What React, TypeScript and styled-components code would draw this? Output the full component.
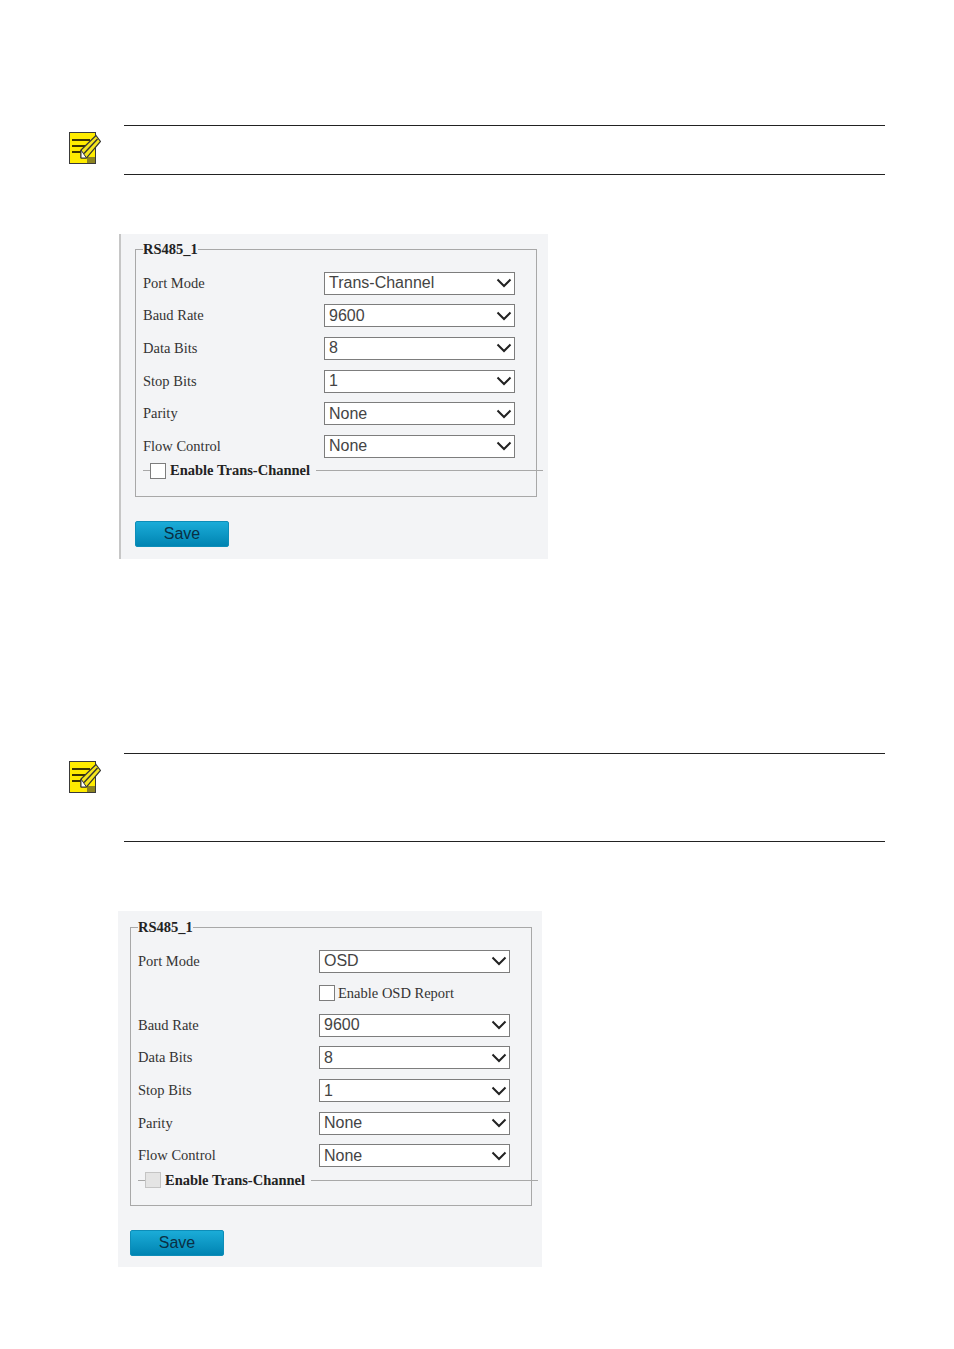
import React from "react";
import styled, { createGlobalStyle } from "styled-components";

const GlobalStyle = createGlobalStyle`
  body {
    margin: 0;
    background: #fff;
  }
`;

const Page = styled.div`
  width: 954px;
  height: 1349px;
  overflow: hidden;
  display: flex;
  flex-direction: column;
  align-items: flex-start;
  padding-top: 125px;
  box-sizing: border-box;
  font-family: "Liberation Serif", serif;
`;

const Note = styled.div<{ $height: number; $after: number }>`
  display: flex;
  align-items: flex-start;
  gap: 23px;
  margin-left: 69px;
  margin-bottom: ${({ $after }) => $after}px;
  height: ${({ $height }) => $height}px;
`;

const NoteBody = styled.div`
  width: 761px;
  height: 100%;
  box-sizing: border-box;
  border-top: 1px solid #222;
  border-bottom: 1px solid #222;
`;

const IconSlot = styled.svg<{ $top: number }>`
  display: block;
  margin-top: ${({ $top }) => $top}px;
  flex: none;
`;

const Panel = styled.div<{ $bordered?: boolean; $width: number; $after?: number }>`
  width: ${({ $width }) => $width}px;
  box-sizing: border-box;
  margin-left: ${({ $bordered }) => ($bordered ? 119 : 118)}px;
  margin-bottom: ${({ $after }) => $after ?? 0}px;
  padding: ${({ $bordered }) => ($bordered ? "7px 0 12px 14px" : "8px 0 11px 12px")};
  background: #f3f4f6;
  border-left: ${({ $bordered }) => ($bordered ? "2px solid #c6c6c6" : "none")};
`;

const Group = styled.fieldset<{ $osd?: boolean }>`
  width: 402px;
  box-sizing: border-box;
  margin: 0;
  padding: 10px 21px ${({ $osd }) => ($osd ? "16.5px" : "17.5px")} 7px;
  border: 1px solid #a8a8a8;
`;

const GroupTitle = styled.legend`
  padding: 0;
  font-size: 14.5px;
  line-height: 16px;
  font-weight: 700;
  color: #222;
`;

const Row = styled.div<{ $height?: number }>`
  display: grid;
  grid-template-columns: 181px 191px;
  align-items: center;
  height: ${({ $height }) => $height ?? 32.6}px;
`;

const Label = styled.span`
  font-size: 14.5px;
  color: #333;
`;

const SelectBox = styled.div`
  grid-column: 2;
  height: 23px;
  box-sizing: border-box;
  display: flex;
  align-items: center;
  justify-content: space-between;
  padding: 0 2px 0 4px;
  background: #fff;
  border: 1px solid #7d7d7d;
  font-family: "Liberation Sans", sans-serif;
  font-size: 16px;
  color: #444;
`;

const CheckLine = styled.div`
  grid-column: 2;
  display: flex;
  align-items: center;
  gap: 3px;
  font-size: 14.5px;
  color: #333;
`;

const Check = styled.span<{ $disabled?: boolean }>`
  display: block;
  flex: none;
  width: 16px;
  height: 16px;
  box-sizing: border-box;
  background: ${({ $disabled }) => ($disabled ? "#e4e4e4" : "#fff")};
  border: 1px solid ${({ $disabled }) => ($disabled ? "#c4c4c4" : "#7d7d7d")};
`;

const SubHead = styled.div`
  display: flex;
  align-items: center;
  height: 16px;
  margin-right: -28px;
`;

const Rule = styled.span<{ $grow?: boolean }>`
  display: block;
  height: 1px;
  background: #a8a8a8;
  flex: ${({ $grow }) => ($grow ? "1" : "none")};
  width: ${({ $grow }) => ($grow ? "auto" : "7px")};
`;

const SubHeadText = styled.span`
  margin: 0 6px 0 4px;
  font-size: 14.5px;
  font-weight: 700;
  color: #222;
  white-space: nowrap;
`;

const SaveButton = styled.button`
  display: block;
  width: 94px;
  height: 26px;
  margin-top: 24px;
  padding: 0;
  border: 1px solid #0d8db8;
  border-radius: 2px;
  background: linear-gradient(#1bacd8, #0084b2);
  font-family: "Liberation Sans", sans-serif;
  font-size: 16px;
  color: #0a2f44;
`;

const NoteIcon: React.FC<{ top: number }> = ({ top }) => (
  <IconSlot $top={top} width="32" height="33" viewBox="0 0 32 33">
    <rect x="0.5" y="0.5" width="26" height="31" fill="#ffec00" stroke="#3a3a3a" />
    <path d="M18 31V25H26V31Z" fill="#8d8420" />
    <path d="M3 8H21M3 14H18M3 20H12" stroke="#3d3500" strokeWidth="2.2" fill="none" />
    <path d="M27 3.5L31.5 9.5L17.5 26L12 26L12 18Z" fill="#f5e61c" stroke="#333" strokeWidth="1.2" />
    <path d="M15 21.5L28.5 7" stroke="#333" strokeWidth="1.4" fill="none" />
    <path d="M12 18L12 26L17.5 26Z" fill="#fff" stroke="#333" />
  </IconSlot>
);

const Chevron: React.FC = () => (
  <svg width="16" height="10" viewBox="0 0 16 10">
    <path d="M1.5 1.5L8 8L14.5 1.5" stroke="#222" strokeWidth="2" fill="none" />
  </svg>
);

const Field: React.FC<{ label: string; value: string }> = ({ label, value }) => (
  <Row>
    <Label>{label}</Label>
    <SelectBox>
      {value}
      <Chevron />
    </SelectBox>
  </Row>
);

const sharedFields = [
  { label: "Baud Rate", value: "9600" },
  { label: "Data Bits", value: "8" },
  { label: "Stop Bits", value: "1" },
  { label: "Parity", value: "None" },
  { label: "Flow Control", value: "None" },
];

const SerialPanel: React.FC<{ mode: string; osd?: boolean; bordered?: boolean; width: number; after?: number }> = ({
  mode,
  osd,
  bordered,
  width,
  after,
}) => (
  <Panel $bordered={bordered} $width={width} $after={after}>
    <Group $osd={osd}>
      <GroupTitle>RS485_1</GroupTitle>
      <Field label="Port Mode" value={mode} />
      {osd && (
        <Row $height={31.4}>
          <CheckLine>
            <Check />
            Enable OSD Report
          </CheckLine>
        </Row>
      )}
      {sharedFields.map((field) => (
        <Field key={field.label} {...field} />
      ))}
      <SubHead>
        <Rule />
        <Check $disabled={osd} />
        <SubHeadText>Enable Trans-Channel</SubHeadText>
        <Rule $grow />
      </SubHead>
    </Group>
    <SaveButton>Save</SaveButton>
  </Panel>
);

const App: React.FC = () => (
  <Page>
    <GlobalStyle />
    <Note $height={50} $after={59}>
      <NoteIcon top={7} />
      <NoteBody />
    </Note>
    <SerialPanel mode="Trans-Channel" bordered width={429} after={194} />
    <Note $height={89} $after={69}>
      <NoteIcon top={8} />
      <NoteBody />
    </Note>
    <SerialPanel mode="OSD" osd width={424} />
  </Page>
);

export default App;
